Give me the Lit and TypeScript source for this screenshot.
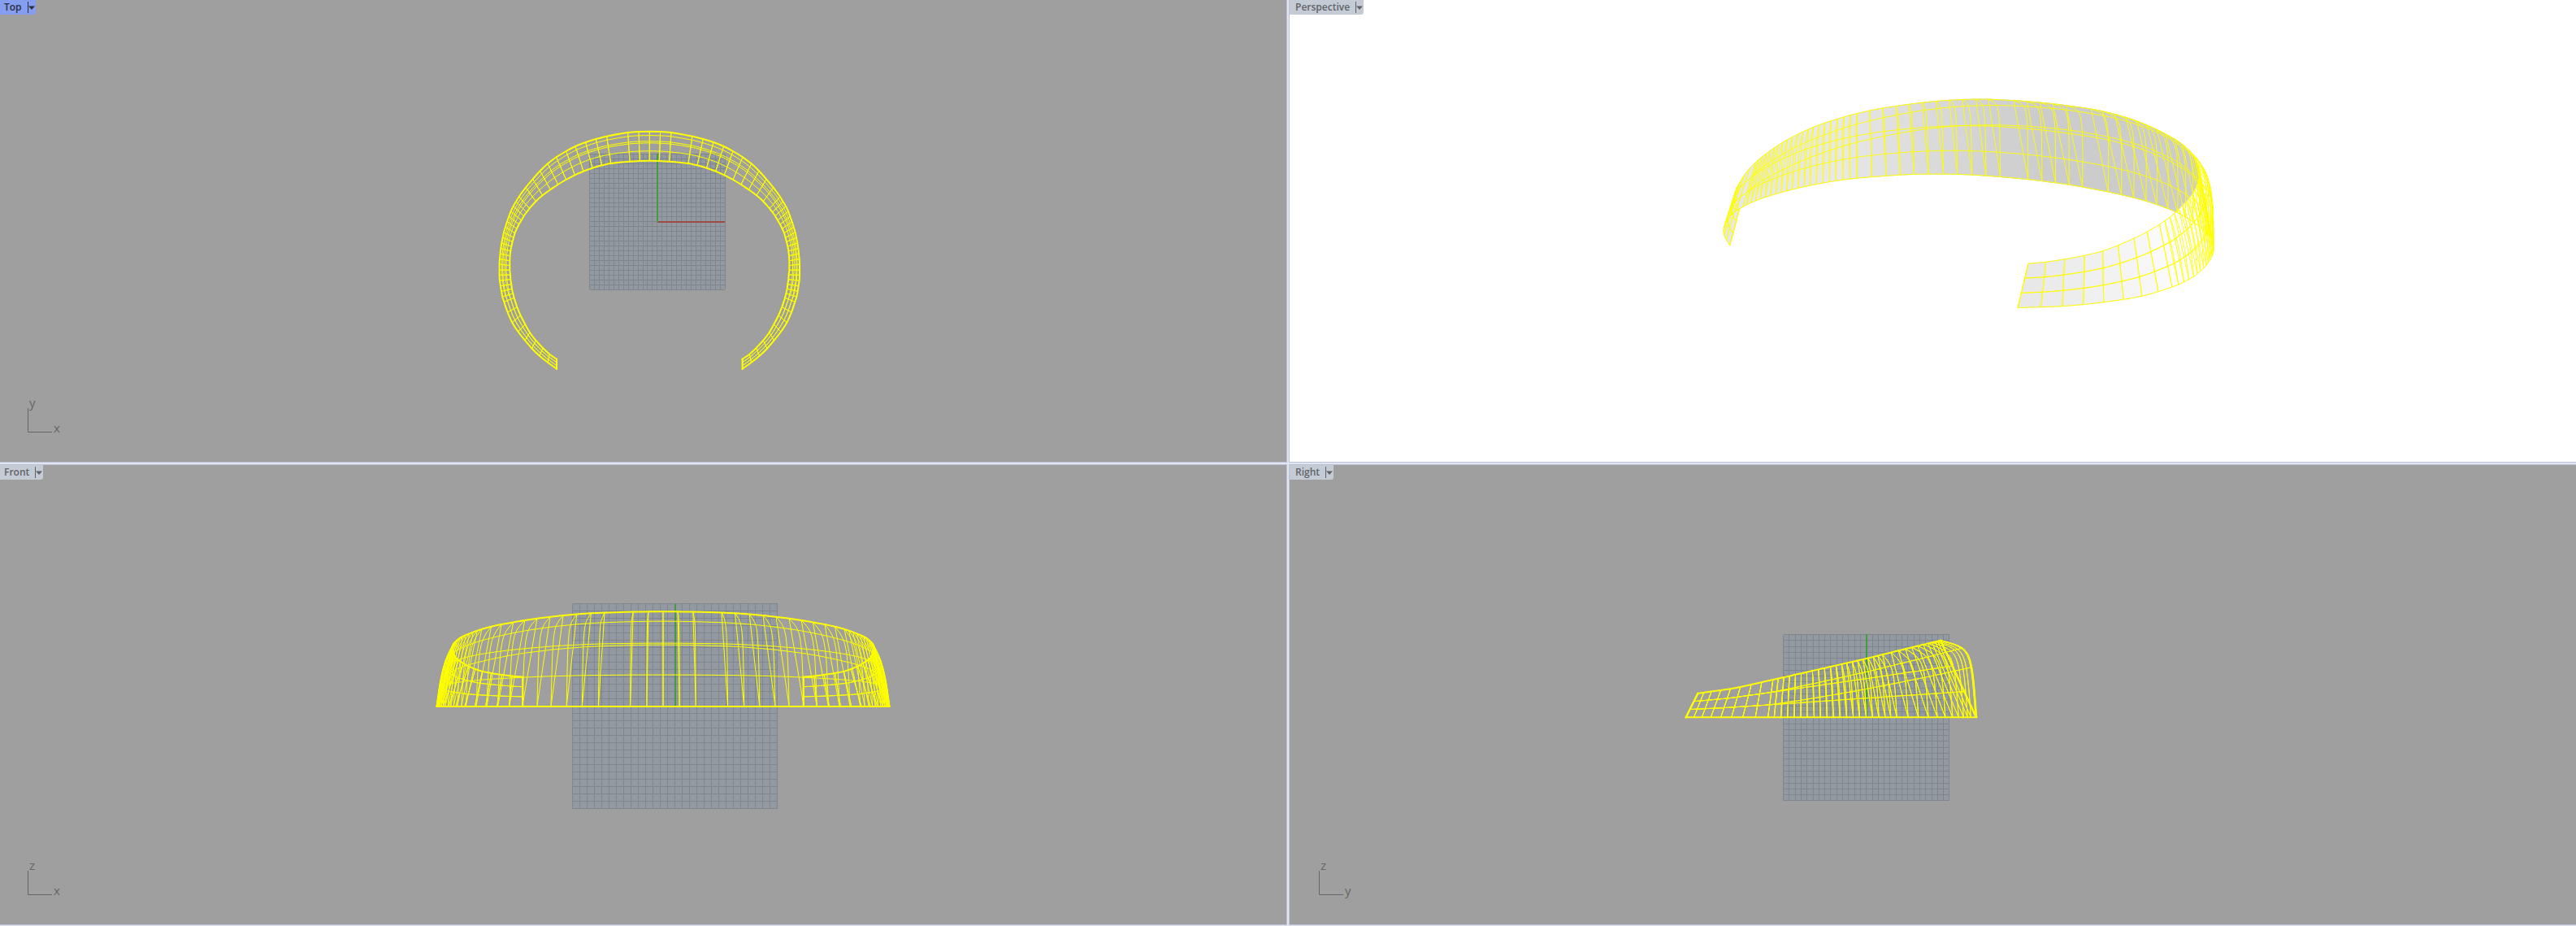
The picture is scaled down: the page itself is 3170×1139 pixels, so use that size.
import { LitElement, html, svg, css } from "lit";
import { customElement, property } from "lit/decorators.js";

type Vec = [number, number, number];
type Pt = [number, number];
type Projection = (p: Vec) => Pt;

/* ---- Model: a symmetric band, one entry per ruling from the middle to an end ---- */

const OUTER_WIDTH = [0, 40, 80, 158, 198, 236, 274, 308, 344, 376, 404, 431, 457, 482, 493, 503, 512, 519, 526, 532, 538, 542, 546, 549, 551, 553, 554, 554, 554, 553, 550, 547, 543, 537, 524, 507, 485, 460, 434, 406, 376, 343];
const OUTER_DEPTH = [65, 66, 69, 83, 93, 105, 120, 138, 160, 184, 211, 241, 272, 306, 324, 341, 360, 379, 398, 418, 437, 457, 477, 497, 516, 536, 555, 576, 595, 615, 635, 655, 675, 694, 732, 770, 804, 836, 866, 893, 917, 941];
const INNER_WIDTH = [0, 36, 73, 143, 176, 211, 244, 276, 308, 338, 366, 395, 420, 443, 454, 464, 473, 482, 490, 497, 502, 506, 510, 513, 515, 516, 516, 516, 514, 513, 510, 508, 504, 500, 489, 476, 459, 442, 420, 394, 369, 343];
const INNER_DEPTH = [173, 174, 176, 183, 190, 200, 212, 226, 243, 261, 280, 301, 323, 349, 363, 377, 393, 408, 424, 440, 457, 472, 489, 506, 524, 542, 560, 577, 594, 611, 629, 646, 663, 679, 713, 744, 777, 807, 836, 864, 887, 905];
const HEIGHTS: Pt[] = [[173, 232], [397, 177], [542, 144], [679, 113], [797, 87], [905, 72]];
const LAST = OUTER_WIDTH.length - 1;
const INDICES = Array.from({ length: LAST * 2 + 1 }, (_, k) => k - LAST);

const heightAt = (depth: number): number => {
  for (let k = 1; k < HEIGHTS.length; k++) {
    const [a, ha] = HEIGHTS[k - 1];
    const [b, hb] = HEIGHTS[k];
    if (depth <= b) return ha + ((hb - ha) * (depth - a)) / (b - a);
  }
  return HEIGHTS[HEIGHTS.length - 1][1];
};

/* v runs from the bottom edge (0) to the top edge (1). */
const surface = (i: number, v: number, bulged: boolean): Vec => {
  const k = Math.abs(i);
  const side = Math.sign(i);
  const t = Math.max(0, (694 - OUTER_DEPTH[k]) / 629);
  const outward = bulged ? Math.pow(t, 0.4) : 0;
  const lift = bulged ? t * (1.15 - 0.15 * t) : 0;
  const b1 = 3 * (1 - v) * (1 - v) * v;
  const b2 = 3 * (1 - v) * v * v;
  const f = 1 - v + outward * (b1 * 0.19 + b2 * 0.52);
  return [
    side * (INNER_WIDTH[k] + (OUTER_WIDTH[k] - INNER_WIDTH[k]) * f),
    INNER_DEPTH[k] + (OUTER_DEPTH[k] - INNER_DEPTH[k]) * f,
    heightAt(INNER_DEPTH[k]) * (v + lift * (b1 * 0.6 + b2 * 0.22)),
  ];
};

/* ---- Projections ---- */

const projectTop: Projection = ([x, y]) => [799.3 + x / 3, 140 + y / 3];
const projectFront: Projection = ([x, , z]) => [816 + x * 0.5035, 297 - z * 0.5035];
const projectRight: Projection = ([, y, z]) => [845.7 - (y - 65) * 0.4087, 310.3 - z * 0.4087];

const CAMERA = [0.75745, -0.46227, -0.00098, 0.09866, 0.12164, 0.1935, -0.84892, 0.07082, -0.11441, -0.18395, -0.06897];
const distance = (p: Vec): number =>
  (CAMERA[8] * p[0]) / 500 + (CAMERA[9] * (p[1] - 500)) / 500 + (CAMERA[10] * p[2]) / 500 + 1;
const projectPerspective: Projection = (p) => {
  const x = p[0] / 500;
  const y = (p[1] - 500) / 500;
  const z = p[2] / 500;
  const w = distance(p);
  return [
    813 + (300 * (CAMERA[0] * x + CAMERA[1] * y + CAMERA[2] * z + CAMERA[3])) / w,
    250 + (300 * (CAMERA[4] * x + CAMERA[5] * y + CAMERA[6] * z + CAMERA[7])) / w,
  ];
};

/* ---- Path building ---- */

const num = (n: number) => n.toFixed(1);
const polyline = (pts: Pt[]) => "M" + pts.map((p) => `${num(p[0])} ${num(p[1])}`).join("L");
const smooth = (pts: Pt[]) => {
  let d = `M${num(pts[0][0])} ${num(pts[0][1])}`;
  for (let k = 0; k < pts.length - 1; k++) {
    const a = pts[Math.max(0, k - 1)];
    const b = pts[k];
    const c = pts[k + 1];
    const e = pts[Math.min(pts.length - 1, k + 2)];
    const span = Math.hypot(c[0] - b[0], c[1] - b[1]) / 3;
    const dir = (p: Pt, q: Pt): Pt => {
      const l = Math.hypot(q[0] - p[0], q[1] - p[1]) || 1;
      return [((q[0] - p[0]) / l) * span, ((q[1] - p[1]) / l) * span];
    };
    const u = dir(a, c);
    const v = dir(b, e);
    d += `C${num(b[0] + u[0])} ${num(b[1] + u[1])} ${num(c[0] - v[0])} ${num(c[1] - v[1])} ${num(c[0])} ${num(c[1])}`;
  }
  return d;
};

const STEPS = Array.from({ length: 13 }, (_, k) => k / 12);
const ruling = (project: Projection, i: number, bulged: boolean) =>
  polyline((bulged ? STEPS : [0, 1]).map((v) => project(surface(i, v, bulged))));
const isocurve = (project: Projection, v: number, bulged: boolean) =>
  smooth(INDICES.map((i) => project(surface(i, v, bulged))));

const wireframe = (project: Projection) => {
  const thin = INDICES.flatMap((i) => [ruling(project, i, false), ruling(project, i, true)]);
  for (const v of [1 / 3, 2 / 3]) thin.push(isocurve(project, v, false), isocurve(project, v, true));
  const edges = [
    isocurve(project, 0, false),
    isocurve(project, 1, false),
    ruling(project, -LAST, false),
    ruling(project, LAST, false),
  ];
  return svg`
    ${thin.map((d) => svg`<path class="iso" d=${d}></path>`)}
    ${edges.map((d) => svg`<path class="edge" d=${d}></path>`)}`;
};

const clamp = (n: number) => Math.min(1, Math.max(0, n));
const shade = (i: number, inside: boolean) => {
  const g = inside ? 204 + 28 * clamp((-1 - i) / 14) : 252 - 20 * clamp((Math.abs(i) - 32) / 8);
  return `rgb(${num(g)} ${num(g)} ${num(g)})`;
};
const shadedFaces = () => {
  const faces: { d: string; far: number; fill: string }[] = [];
  for (const bulged of [true, false]) {
    const rows = bulged ? 6 : 1;
    for (let i = -LAST; i < LAST; i++) {
      for (let r = 0; r < rows; r++) {
        const corners = [
          surface(i, r / rows, bulged),
          surface(i + 1, r / rows, bulged),
          surface(i + 1, (r + 1) / rows, bulged),
          surface(i, (r + 1) / rows, bulged),
        ];
        const pts = corners.map(projectPerspective);
        const area = pts.reduce((sum, p, k) => {
          const q = pts[(k + 1) % 4];
          return sum + p[0] * q[1] - q[0] * p[1];
        }, 0);
        faces.push({
          d: polyline(pts) + "Z",
          far: corners.reduce((sum, p) => sum + distance(p), 0) + (bulged && area < 0 ? 0.05 : 0),
          fill: shade(i, area < 0),
        });
      }
    }
  }
  return faces.sort((a, b) => b.far - a.far);
};

/* ---- Construction grid: 28 by 28 cells ---- */

const grid = (x: number, y: number, cell: number) => {
  const size = cell * 28;
  const marks = Array.from({ length: 29 }, (_, k) => k * cell);
  const d = marks
    .map((m) => `M${num(x + m)} ${num(y)}V${num(y + size)}M${num(x)} ${num(y + m)}H${num(x + size)}`)
    .join("");
  return svg`<rect class="plane" x=${x} y=${y} width=${size} height=${size}></rect><path class="grid" d=${d}></path>`;
};

const scenes: Record<string, () => unknown> = {
  Top: () => svg`
    ${grid(725.5, 189.5, 5.95)}
    <path class="axis-x" d="M809 273H892"></path>
    <path class="axis-y" d="M809 273V189"></path>
    ${wireframe(projectTop)}`,
  Perspective: () => svg`
    ${shadedFaces().map((f) => svg`<path d=${f.d} fill=${f.fill} stroke=${f.fill}></path>`)}
    <g class="fine">${wireframe(projectPerspective)}</g>`,
  Front: () => svg`
    ${grid(704.5, 170.5, 9)}
    <path class="axis-y" d="M831 297V171"></path>
    ${wireframe(projectFront)}`,
  Right: () => svg`
    ${grid(607.5, 208.5, 7.3)}
    <path class="axis-y" d="M710 310V208"></path>
    ${wireframe(projectRight)}`,
};

@customElement("view-port")
export class ViewPort extends LitElement {
  @property() name = "";
  @property() across = "";
  @property() up = "";
  @property() extent = "0 0 1583 568";

  static styles = css`
    :host {
      display: grid;
      grid-template: minmax(0, 1fr) / minmax(0, 1fr);
      overflow: hidden;
      background: #9f9f9f;
      outline: 1px solid #bcc2da;
      font: 600 12px/18px "Open Sans", "Noto Sans", sans-serif;
      color: #5f6367;
    }
    :host([name="Perspective"]) {
      background: #fff;
    }
    .scene,
    .title,
    .gizmo {
      grid-area: 1 / 1;
    }
    .scene {
      display: block;
      width: 100%;
      height: 100%;
    }
    .title {
      justify-self: start;
      align-self: start;
      display: flex;
      align-items: center;
      height: 18px;
      background: #c5cbd5;
      border-bottom-right-radius: 3px;
    }
    :host([active]) .title {
      background: #869ef0;
      color: #2c2f3a;
    }
    button {
      margin: 0;
      border: 0;
      background: none;
      color: inherit;
      font: inherit;
    }
    .label {
      padding: 0 7px 0 var(--inset, 7px);
    }
    .menu {
      display: flex;
      align-items: center;
      height: 14px;
      padding: 0 1px 0 0;
      border-left: 1px solid currentColor;
    }
    .gizmo {
      align-self: end;
      justify-self: start;
      margin: 0 0 28px calc(var(--inset, 7px) + 28px);
      fill: #666;
      font: 400 15px/18px "Open Sans", "Noto Sans", sans-serif;
    }
    .gizmo path {
      fill: none;
      stroke: #666;
    }
    .plane {
      fill: #9299a1;
    }
    .grid {
      fill: none;
      stroke: #7f868e;
      shape-rendering: crispEdges;
    }
    .axis-x,
    .axis-y {
      fill: none;
      stroke: #a04a46;
      stroke-width: 2px;
    }
    .axis-y {
      stroke: #469a46;
    }
    .iso,
    .edge {
      fill: none;
      stroke: #ff0;
      stroke-width: 1px;
    }
    .edge {
      stroke-width: 2px;
      stroke-linejoin: round;
      stroke-linecap: square;
    }
    .fine .edge {
      stroke-width: 1px;
    }
    .fine .iso {
      stroke-opacity: 0.9;
    }
  `;

  render() {
    return html`
      <svg class="scene" viewBox=${this.extent} role="img" aria-label=${`${this.name} view`}>${scenes[this.name]?.()}</svg>
      <div class="title">
        <button class="label">${this.name}</button>
        <button class="menu" aria-label=${`${this.name} view menu`}>
          <svg width="8" height="5" viewBox="0 0 8 5"><path d="M0 0.5H8L4 5Z" fill="currentColor"></path></svg>
        </button>
      </div>
      ${this.up
        ? html`<svg class="gizmo" width="48" height="60" viewBox="0 0 48 60">
            <path d="M1.5 22V51.5H31"></path>
            <text x="3" y="21">${this.up}</text>
            <text x="33" y="52">${this.across}</text>
          </svg>`
        : ""}
    `;
  }
}

@customElement("app-root")
export class AppRoot extends LitElement {
  static styles = css`
    :host {
      display: grid;
      box-sizing: border-box;
      grid-template: 568fr 565fr / 1fr 1fr;
      gap: 4px;
      height: 100vh;
      padding-bottom: 2px;
      background: #e3e5ec;
      overflow: hidden;
    }
    .left {
      --inset: 5px;
    }
  `;

  render() {
    return html`
      <view-port class="left" name="Top" active up="y" across="x"></view-port>
      <view-port name="Perspective"></view-port>
      <view-port class="left" name="Front" extent="0 0 1583 565" up="z" across="x"></view-port>
      <view-port name="Right" extent="0 0 1583 565" up="z" across="y"></view-port>
    `;
  }
}
